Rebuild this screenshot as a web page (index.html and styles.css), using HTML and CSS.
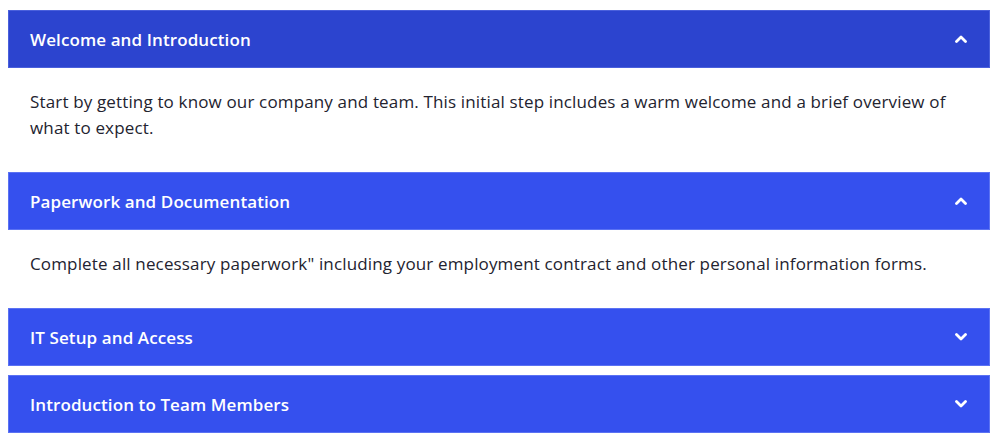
FILE: index.html
```html
<!DOCTYPE html>
<html lang="en">
<head>
<meta charset="utf-8">
<title>Onboarding</title>
<link rel="stylesheet" href="styles.css">
</head>
<body>
<div class="accordion">
  <div class="item">
    <div class="header active">
      <span class="title">Welcome and Introduction</span>
      <svg class="chev" width="12" height="8" viewBox="0 0 12 8"><polyline points="1.5,6.5 6,2 10.5,6.5" /></svg>
    </div>
    <div class="content">Start by getting to know our company and team. This initial step includes a warm welcome and a brief overview of what to expect.</div>
  </div>
  <div class="item">
    <div class="header">
      <span class="title">Paperwork and Documentation</span>
      <svg class="chev" width="12" height="8" viewBox="0 0 12 8"><polyline points="1.5,6.5 6,2 10.5,6.5" /></svg>
    </div>
    <div class="content">Complete all necessary paperwork" including your employment contract and other personal information forms.</div>
  </div>
  <div class="item">
    <div class="header">
      <span class="title">IT Setup and Access</span>
      <svg class="chev" width="12" height="8" viewBox="0 0 12 8"><polyline points="1.5,1.5 6,6 10.5,1.5" /></svg>
    </div>
  </div>
  <div class="item">
    <div class="header">
      <span class="title">Introduction to Team Members</span>
      <svg class="chev" width="12" height="8" viewBox="0 0 12 8"><polyline points="1.5,1.5 6,6 10.5,1.5" /></svg>
    </div>
  </div>
</div>
</body>
</html>
```
FILE: styles.css
```css
html, body {
  margin: 0;
  padding: 0;
  background: #ffffff;
}
body {
  padding: 10px 8px 8px 8px;
  font-family: "Open Sans", "Noto Sans", sans-serif;
}
.accordion {
  display: flex;
  flex-direction: column;
  gap: 9px;
}
.header {
  display: flex;
  align-items: center;
  justify-content: space-between;
  height: 58px;
  box-sizing: border-box;
  padding: 0 22px 0 21px;
  background: #3550ee;
  border: 1px solid #5b72f3;
  color: #ffffff;
  font-size: 17px;
  font-weight: 600;
  letter-spacing: 0.1px;
}
.header.active {
  background: #2c44cf;
  border-color: #4a60dc;
}
.chev polyline {
  fill: none;
  stroke: #ffffff;
  stroke-width: 2.8;
  stroke-linecap: round;
  stroke-linejoin: round;
}
.content {
  padding: 21px 21px 22px 22px;
  font-size: 17px;
  line-height: 26px;
  letter-spacing: 0.15px;
  color: #23232f;
}
```
